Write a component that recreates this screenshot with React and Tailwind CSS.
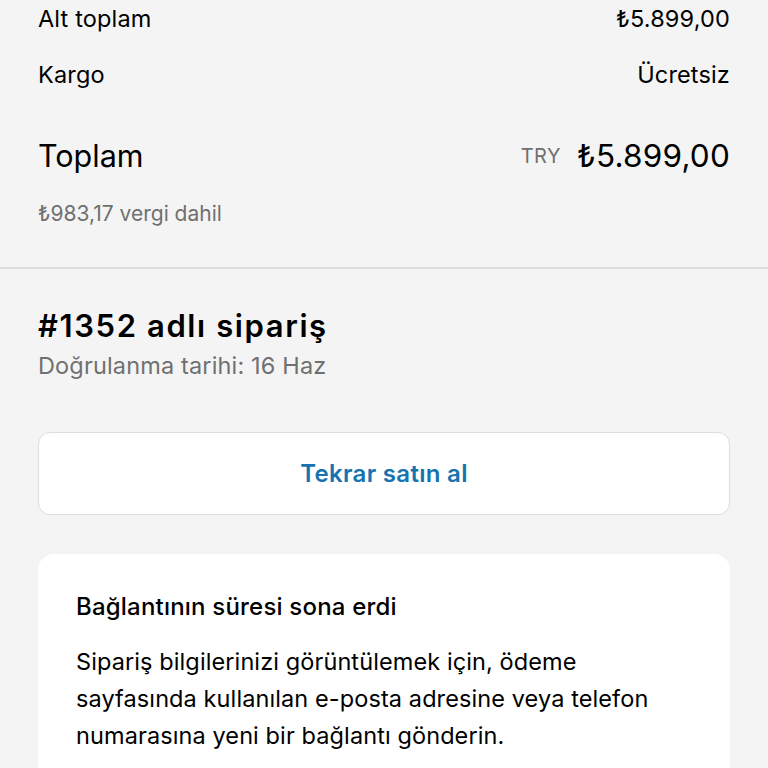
export default function App() {
  return (
    <div className="min-h-[768px] w-[768px] bg-[#f4f4f4] text-[#000000]" style={{ fontFamily: 'Inter, "Noto Sans", sans-serif' }}>
      <div className="px-[38px]">
        <div className="flex h-[38px] items-center justify-between text-[23.5px] tracking-[0.15px]">
          <span>Alt toplam</span>
          <span>₺5.899,00</span>
        </div>
        <div className="mt-[18px] flex h-[38px] items-center justify-between text-[23.5px] tracking-[0.15px]">
          <span>Kargo</span>
          <span>Ücretsiz</span>
        </div>
        <div className="mt-[42px] flex h-[40px] items-center justify-between">
          <span className="text-[30.5px]">Toplam</span>
          <span className="flex items-center gap-[16px]">
            <span className="text-[20px] tracking-[0.5px] text-[#707070]">TRY</span>
            <span className="text-[31.5px] tracking-[0.2px]">₺5.899,00</span>
          </span>
        </div>
        <div className="mt-[25px] flex h-[26px] items-center text-[21px] text-[#707070]">₺983,17 vergi dahil</div>
      </div>
      <div className="mt-[40px] h-[2px] w-full bg-[#dcdcdc]" />
      <div className="px-[38px]">
        <div className="mt-[37px] flex h-[40px] items-center text-[31px] font-semibold tracking-[1.6px]">#1352 adlı sipariş</div>
        <div className="mt-[5px] flex h-[30px] items-center text-[23.5px] tracking-[0.15px] text-[#707070]">Doğrulanma tarihi: 16 Haz</div>
        <button className="mt-[51px] flex h-[83px] w-full items-center justify-center rounded-[12px] border border-[#dedede] bg-white text-[24px] font-semibold tracking-[0.3px] text-[#1773b0]">
          Tekrar satın al
        </button>
        <div className="mt-[39px] rounded-[16px] bg-white px-[38px] pt-[38px] pb-[40px]">
          <div className="flex h-[30px] items-center text-[24px] font-medium tracking-[0.2px]">Bağlantının süresi sona erdi</div>
          <p className="mt-[21px] text-[23.5px] leading-[37px] tracking-[0.1px]">
            Sipariş bilgilerinizi görüntülemek için, ödeme sayfasında kullanılan e-posta adresine veya telefon numarasına yeni bir bağlantı gönderin.
          </p>
        </div>
      </div>
    </div>
  );
}
